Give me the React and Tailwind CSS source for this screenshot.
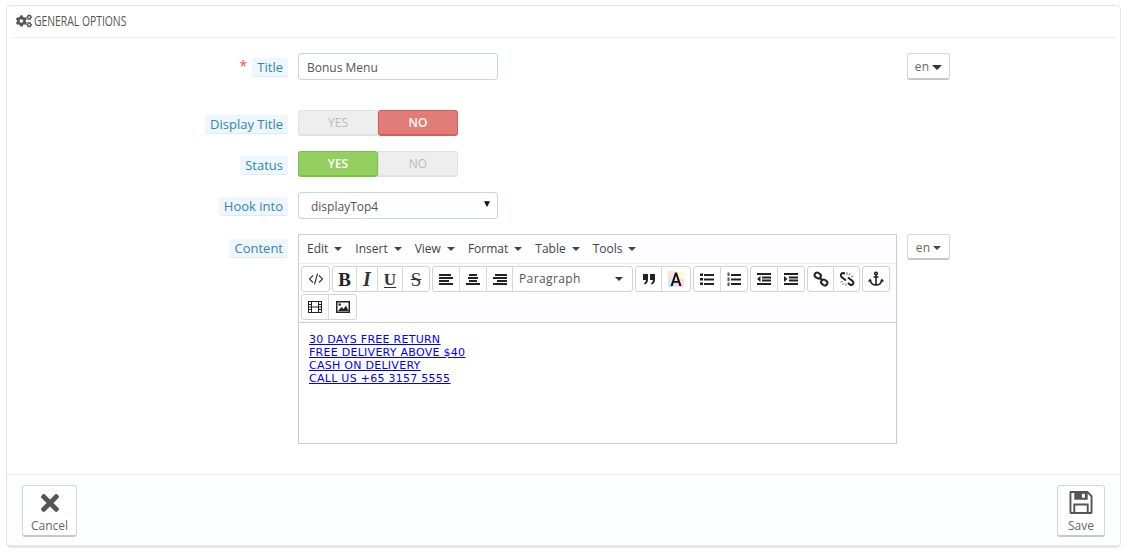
import React from 'react';
import { FaCogs, FaTimes } from 'react-icons/fa';

const Caret = ({ className = '' }) => (
  <span className={`inline-block w-0 h-0 border-x-[4px] border-x-transparent border-t-[4px] border-t-[#333] ${className}`} />
);

const Label = ({ children, required, flush }) => (
  <div className={`w-[278px] shrink-0 flex justify-end items-center gap-[5px] ${flush ? 'pt-0' : 'pt-[2px]'}`}>
    {required && <span className="text-[#f54c3e] text-[14px] leading-none -mt-1">*</span>}
    <span className="bg-[#edf7fd] rounded-[3px] border-b border-[#dcecf6] px-[5px] h-[19px] leading-[19px] text-[13px] text-[#3586ae]">
      {children}
    </span>
  </div>
);

const LangButton = ({ small }) => (
  <button
    className={`w-[43px] ${small ? 'h-[26px] pt-[2px]' : 'h-[27px] pt-[2px]'} ml-[10px] shrink-0 bg-white rounded-[3px] border border-[#d6d6d6] border-b-[2px] border-b-[#c8c8c8] text-[12px] text-[#666] tracking-[0.3px] flex items-center justify-center gap-[3px]`}
  >
    en
    <Caret className={small ? 'border-t-[#444]' : 'border-t-[#333] border-x-[5px] border-t-[5px]'} />
  </button>
);

const Toggle = ({ value }) => (
  <div className="w-[160px] h-[26px] flex rounded-[3px] text-[12px] font-medium">
    <div
      className={
        value
          ? 'w-[80px] bg-[#93d05f] border border-[#7fbd4d] border-b-[2px] rounded-[3px] text-white font-semibold flex items-center justify-center'
          : 'w-[80px] bg-[#eeeeee] border border-[#e2e2e2] border-b-[2px] rounded-l-[3px] text-[#bbbbbb] flex items-center justify-center'
      }
    >
      YES
    </div>
    <div
      className={
        value
          ? 'w-[80px] bg-[#eeeeee] border border-[#e2e2e2] border-b-[2px] rounded-r-[3px] text-[#bbbbbb] flex items-center justify-center'
          : 'w-[80px] bg-[#e27c79] border border-[#d65e5a] border-b-[2px] rounded-[3px] text-white font-semibold flex items-center justify-center'
      }
    >
      NO
    </div>
  </div>
);

const Group = ({ children, className = '' }) => (
  <div className={`flex h-[26px] bg-white border border-[#d3d3d3] rounded-[3px] divide-x divide-[#d9d9d9] ${className}`}>
    {children}
  </div>
);

const Btn = ({ w, children }) => (
  <div style={{ width: w }} className="h-full flex items-center justify-center text-[#222] shrink-0">
    {children}
  </div>
);

const Ico = ({ children }) => (
  <svg width="16" height="16" viewBox="0 0 16 16" fill="#222">
    {children}
  </svg>
);

const Bars = ({ rows }) => (
  <Ico>
    {rows.map(([x, y, w], i) => (
      <rect key={i} x={x} y={y} width={w} height="2" />
    ))}
  </Ico>
);

const App = () => {
  return (
    <div className="w-[1127px] h-[551px] bg-white px-[6px] pt-[5px] font-['Open_Sans',sans-serif] overflow-hidden">
      <div className="h-[543px] bg-white border border-[#e6e6e6] border-b-[3px] rounded-[5px] flex flex-col">
        {/* Heading */}
        <div className="mx-[5px] h-[32px] border-b border-[#eeeeee] flex items-center gap-[2px] pl-[4px] pb-[2px] text-[#555] shrink-0">
          <FaCogs size={16} className="text-[#555] shrink-0" />
          <span className="text-[14px] uppercase origin-left scale-x-[0.74] whitespace-nowrap">General options</span>
        </div>

        {/* Form */}
        <div className="flex-1 pt-[15px] pl-[3px] text-[12px] text-[#555]">
          <div className="flex items-start">
            <div className="flex h-[27px]">
              <Label required>Title</Label>
            </div>
            <div className="ml-[10px] w-[200px] h-[27px] border border-[#c7d6db] rounded-[3px] bg-white pl-[8px] pt-[2px] flex items-center">
              Bonus Menu
            </div>
            <div className="ml-[399px]">
              <LangButton />
            </div>
          </div>

          <div className="flex mt-[30px] h-[26px]">
            <Label>Display Title</Label>
            <div className="ml-[10px]">
              <Toggle value={false} />
            </div>
          </div>

          <div className="flex mt-[15px] h-[26px]">
            <Label>Status</Label>
            <div className="ml-[10px]">
              <Toggle value />
            </div>
          </div>

          <div className="flex mt-[15px] h-[27px]">
            <Label>Hook into</Label>
            <div className="ml-[10px] w-[200px] border border-[#c7d6db] rounded-[3px] bg-white pl-[12px] pr-[5px] pt-[2px] flex items-center justify-between">
              displayTop4
              <span className="text-[10px] text-[#111] -mt-[6px]">▼</span>
            </div>
          </div>

          <div className="flex mt-[15px] items-start">
            <div className="flex h-[28px]">
              <Label flush>Content</Label>
            </div>
            <div className="ml-[10px] w-[599px] h-[210px] border border-[#cccccc] flex flex-col bg-[#fdfdff] shrink-0">
              {/* Menu bar */}
              <div className="h-[29px] border-b border-[#ececec] flex items-center pl-[8px] gap-[13px] text-[12px] text-[#444] shrink-0">
                {['Edit', 'Insert', 'View', 'Format', 'Table', 'Tools'].map((m) => (
                  <span key={m} className="flex items-center gap-[6px]">
                    {m}
                    <Caret className="border-t-[#444]" />
                  </span>
                ))}
              </div>

              {/* Toolbar */}
              <div className="h-[59px] border-b border-[#cccccc] shrink-0 pl-[2px] pt-[2px] flex flex-col gap-[2px]">
                <div className="flex gap-[2px]">
                  <Group>
                    <Btn w={27}>
                      <svg width="16" height="16" viewBox="0 0 16 16" fill="none" stroke="#333" strokeWidth="1.1">
                        <path d="M5 4.5 1.5 8 5 11.5M11 4.5 14.5 8 11 11.5M9.5 2.5 6.5 13.5" />
                      </svg>
                    </Btn>
                  </Group>
                  <Group>
                    <Btn w={24}>
                      <span className="font-['Liberation_Serif',serif] font-bold text-[19px] leading-none">B</span>
                    </Btn>
                    <Btn w={21}>
                      <span className="font-['Liberation_Serif',serif] italic font-bold text-[20px] leading-none text-[#333]">I</span>
                    </Btn>
                    <Btn w={25}>
                      <span className="font-['Liberation_Serif',serif] font-bold text-[17px] leading-none underline underline-offset-2 text-[#333]">U</span>
                    </Btn>
                    <Btn w={26}>
                      <span className="font-['Liberation_Serif',serif] text-[19px] leading-none line-through text-[#333]">S</span>
                    </Btn>
                  </Group>
                  <Group>
                    <Btn w={27}>
                      <Bars rows={[[1, 3, 12], [1, 6, 14], [1, 9, 10], [1, 12, 14]]} />
                    </Btn>
                    <Btn w={27}>
                      <Bars rows={[[4, 3, 8], [3, 6, 10], [4, 9, 8], [1, 12, 14]]} />
                    </Btn>
                    <Btn w={26}>
                      <Bars rows={[[3, 3, 12], [1, 6, 14], [5, 9, 10], [1, 12, 14]]} />
                    </Btn>
                    <Btn w={119}>
                      <div className="w-full flex items-center justify-between pl-[6px] pr-[9px] text-[12px] text-[#555] tracking-[0.4px]">
                        Paragraph
                        <Caret className="border-t-[#333]" />
                      </div>
                    </Btn>
                  </Group>
                  <Group>
                    <Btn w={26}>
                      <Ico>
                        <path d="M2 3h5v5.5C7 11.5 5.5 13 3.5 13.5l-.6-1.3C4 11.8 4.8 11 4.9 9H2zM9 3h5v5.5c0 3-1.5 4.5-3.5 5l-.6-1.3c1.1-.4 1.9-1.2 2-3.2H9z" />
                      </Ico>
                    </Btn>
                    <Btn w={28}>
                      <svg width="16" height="16" viewBox="0 0 16 16">
                        <rect x="0" y="0" width="8" height="8" fill="#fde0e0" />
                        <rect x="8" y="0" width="8" height="8" fill="#fdfbd0" />
                        <rect x="0" y="8" width="8" height="8" fill="#d5e6fb" />
                        <rect x="8" y="8" width="8" height="8" fill="#fbdcec" />
                        <path d="M2.5 15 7 1.5h2L13.5 15h-2.2l-1-3.2H5.7L4.7 15zM6.3 10h3.4L8 4.5z" fill="#111" />
                      </svg>
                    </Btn>
                  </Group>
                  <Group>
                    <Btn w={27}>
                      <Ico>
                        <rect x="1" y="2.5" width="3" height="2.5" />
                        <rect x="1" y="7" width="3" height="2.5" />
                        <rect x="1" y="11.5" width="3" height="2.5" />
                        <rect x="5" y="3" width="10" height="2" />
                        <rect x="5" y="7.5" width="10" height="2" />
                        <rect x="5" y="12" width="10" height="2" />
                      </Ico>
                    </Btn>
                    <Btn w={26}>
                      <Ico>
                        <rect x="1.5" y="1.5" width="2" height="3.5" fill="#555" />
                        <rect x="1.5" y="6.5" width="2" height="3.5" fill="#555" />
                        <rect x="1.5" y="11.5" width="2" height="3.5" fill="#555" />
                        <rect x="5" y="3" width="10" height="2" />
                        <rect x="5" y="7.5" width="10" height="2" />
                        <rect x="5" y="12" width="10" height="2" />
                      </Ico>
                    </Btn>
                  </Group>
                  <Group>
                    <Btn w={27}>
                      <Ico>
                        <rect x="1" y="2" width="14" height="2" />
                        <rect x="6" y="5.5" width="9" height="2" />
                        <rect x="6" y="8.5" width="9" height="2" />
                        <rect x="1" y="12" width="14" height="2" />
                        <path d="M4.5 5v6L1 8z" />
                      </Ico>
                    </Btn>
                    <Btn w={26}>
                      <Ico>
                        <rect x="1" y="2" width="14" height="2" />
                        <rect x="6" y="5.5" width="9" height="2" />
                        <rect x="6" y="8.5" width="9" height="2" />
                        <rect x="1" y="12" width="14" height="2" />
                        <path d="M1 5v6l3.5-3z" />
                      </Ico>
                    </Btn>
                  </Group>
                  <Group>
                    <Btn w={26}>
                      <svg width="16" height="16" viewBox="0 0 16 16" fill="none" stroke="#222" strokeWidth="2">
                        <rect x="1.5" y="2" width="6.5" height="5" rx="2.5" transform="rotate(35 4.7 4.5)" />
                        <rect x="8" y="9" width="6.5" height="5" rx="2.5" transform="rotate(35 11.2 11.5)" />
                        <path d="M6 6.5 10 9.5" />
                      </svg>
                    </Btn>
                    <Btn w={25}>
                      <svg width="16" height="16" viewBox="0 0 16 16" fill="none" stroke="#222" strokeWidth="2">
                        <path d="M6 2.500 4 2C2 2 1 5 2.500 6L7 9.500M9 6.500l4.500 3.500c1.500 1 1 3.200-.5 3.800-1 .4-2 0-2.500-.5L9 12" />
                        <path d="M8 1v3M11 2 10 4.500M14.500 5 12 6M1.500 11 4 10.500M3.500 14 5 12M7 15v-2.500" strokeWidth="0.8" stroke="#555" />
                      </svg>
                    </Btn>
                  </Group>
                  <Group>
                    <Btn w={26}>
                      <svg width="16" height="16" viewBox="0 0 16 16" fill="none" stroke="#222" strokeWidth="1.6">
                        <circle cx="8" cy="2.5" r="1.3" />
                        <path d="M8 4v10M5.500 6h5M2 9c0 3 3 5 6 5s6-2 6-5" />
                        <path d="M.5 10.500 2 8.500l1.500 2M12.500 10.500 14 8.500l1.500 2" strokeWidth="1.2" />
                      </svg>
                    </Btn>
                  </Group>
                </div>
                <div className="flex">
                  <Group>
                    <Btn w={27}>
                      <svg width="16" height="16" viewBox="0 0 16 16" fill="none" stroke="#222" strokeWidth="1">
                        <rect x="1.500" y="2.500" width="13" height="11" />
                        <path d="M4.500 2.500v11M11.500 2.500v11M1.500 5.500h3M1.500 8h13M1.500 10.500h3M11.500 5.500h3M11.500 10.500h3" />
                      </svg>
                    </Btn>
                    <Btn w={27}>
                      <Ico>
                        <path
                          fillRule="evenodd"
                          d="M1 2h14v12H1zM2.500 3.500v9h11v-9zM3 12l3.500-4 2 2 2.500-3.500 2.500 5.500zM6 5.500a1.300 1.300 0 1 1-2.600 0 1.300 1.300 0 0 1 2.600 0z"
                        />
                      </Ico>
                    </Btn>
                  </Group>
                </div>
              </div>

              {/* Editor body */}
              <div className="flex-1 bg-white pl-[10px] pt-[10px] flex flex-col items-start font-['DejaVu_Sans',sans-serif] text-[11px] leading-[13px] text-[#0000ff] underline tracking-[0.27px]">
                <a>30 DAYS FREE RETURN</a>
                <a>FREE DELIVERY ABOVE $40</a>
                <a>CASH ON DELIVERY</a>
                <a>CALL US +65 3157 5555</a>
              </div>
            </div>
            <LangButton small />
          </div>
        </div>

        {/* Footer */}
        <div className="h-[71px] shrink-0 bg-[#fcfdfe] border-t border-[#eeeeee] rounded-b-[5px] flex justify-between items-start pt-[10px] pl-[15px] pr-[15px]">
          <button className="w-[55px] h-[52px] bg-white border border-[#d6d6d6] border-b-[2px] border-b-[#c8c8c8] rounded-[3px] flex flex-col items-center pt-[4px] text-[12px] text-[#666]">
            <FaTimes size={28} className="text-[#555]" />
            <span className="mt-[1px]">Cancel</span>
          </button>
          <button className="w-[48px] h-[52px] bg-white border border-[#d6d6d6] border-b-[2px] border-b-[#c8c8c8] rounded-[3px] flex flex-col items-center pt-[5px] text-[12px] text-[#666]">
            <svg width="24" height="24" viewBox="0 0 24 24" fill="#555">
              <path
                fillRule="evenodd"
                d="M1.500 0H19l5 5v17.500a1.500 1.500 0 0 1-1.500 1.500h-21A1.500 1.500 0 0 1 0 22.500v-21A1.500 1.500 0 0 1 1.500 0zM2 2v20h2V13h16v9h2V6l-3-3.500V9H5V2zM6 15v7h12v-7z"
              />
              <rect x="13" y="3" width="3" height="4" fill="#fff" />
            </svg>
            <span className="mt-[3px]">Save</span>
          </button>
        </div>
      </div>
    </div>
  );
};

export default App;
